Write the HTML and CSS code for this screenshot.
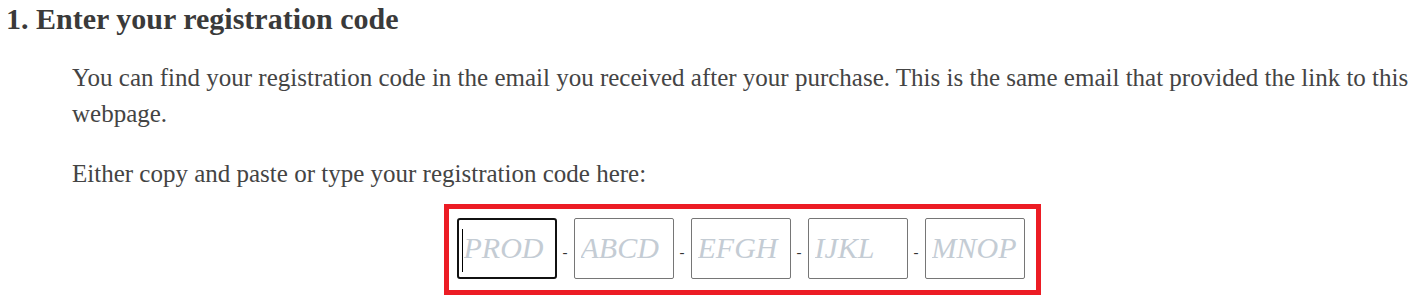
FILE: index.html
```html
<!DOCTYPE html>
<html lang="en">
<head>
<meta charset="utf-8">
<title>Enter your registration code</title>
<link rel="stylesheet" href="styles.css">
</head>
<body>
<section class="step">
  <h2 class="step-title">1. Enter your registration code</h2>
  <div class="step-body">
    <p class="text">You can find your registration code in the email you received after your purchase. This is the same email that provided the link to this webpage.</p>
    <p class="text">Either copy and paste or type your registration code here:</p>
    <div class="code-wrap">
      <div class="code-box">
        <span class="field focused"><input class="code-input" type="text" maxlength="4" placeholder="PROD"><span class="caret"></span></span>
        <span class="dash">-</span>
        <span class="field"><input class="code-input" type="text" maxlength="4" placeholder="ABCD"></span>
        <span class="dash">-</span>
        <span class="field"><input class="code-input" type="text" maxlength="4" placeholder="EFGH"></span>
        <span class="dash">-</span>
        <span class="field"><input class="code-input" type="text" maxlength="4" placeholder="IJKL"></span>
        <span class="dash">-</span>
        <span class="field"><input class="code-input" type="text" maxlength="4" placeholder="MNOP"></span>
      </div>
    </div>
  </div>
</section>
</body>
</html>
```
FILE: styles.css
```css
html, body {
  margin: 0;
  padding: 0;
  background: #ffffff;
}

body {
  font-family: "Liberation Serif", "Times New Roman", serif;
  color: #444444;
  padding: 0 16px 0 6px;
}

.step-title {
  margin: 2px 0 0 0;
  font-size: 30px;
  line-height: 34px;
  font-weight: bold;
  color: #3a3a3a;
}

.step-body {
  margin: 24px 0 0 66px;
}

.text {
  margin: 0 0 24px 0;
  font-size: 25px;
  line-height: 36px;
  color: #444444;
}

.code-wrap {
  display: flex;
  justify-content: center;
  margin-top: -12px;
}

.code-box {
  display: flex;
  align-items: center;
  border: 5px solid #ec1c24;
  padding: 9px 11px 11px 8px;
}

.field {
  position: relative;
  display: block;
  width: 100px;
  height: 61px;
  box-sizing: border-box;
  border: 1px solid #767676;
  border-radius: 2px;
  overflow: hidden;
}

.field.focused {
  border: 2px solid #111111;
  border-radius: 3px;
}

.code-input {
  display: block;
  width: 100%;
  height: 100%;
  box-sizing: border-box;
  border: 0;
  margin: 0;
  padding: 0 4px 2px 6px;
  outline: none;
  background: transparent;
  font-family: "Liberation Serif", "Times New Roman", serif;
  font-style: italic;
  font-size: 30px;
  color: #333333;
}

.focused .code-input {
  padding-left: 5px;
}

.code-input::placeholder {
  color: #c4ccd4;
  opacity: 1;
}

.caret {
  position: absolute;
  left: 3px;
  top: 9px;
  width: 1px;
  height: 43px;
  background: #000000;
}

.dash {
  width: 17px;
  text-align: center;
  font-size: 15px;
  line-height: 15px;
  margin-top: 7px;
  color: #333333;
}
```
